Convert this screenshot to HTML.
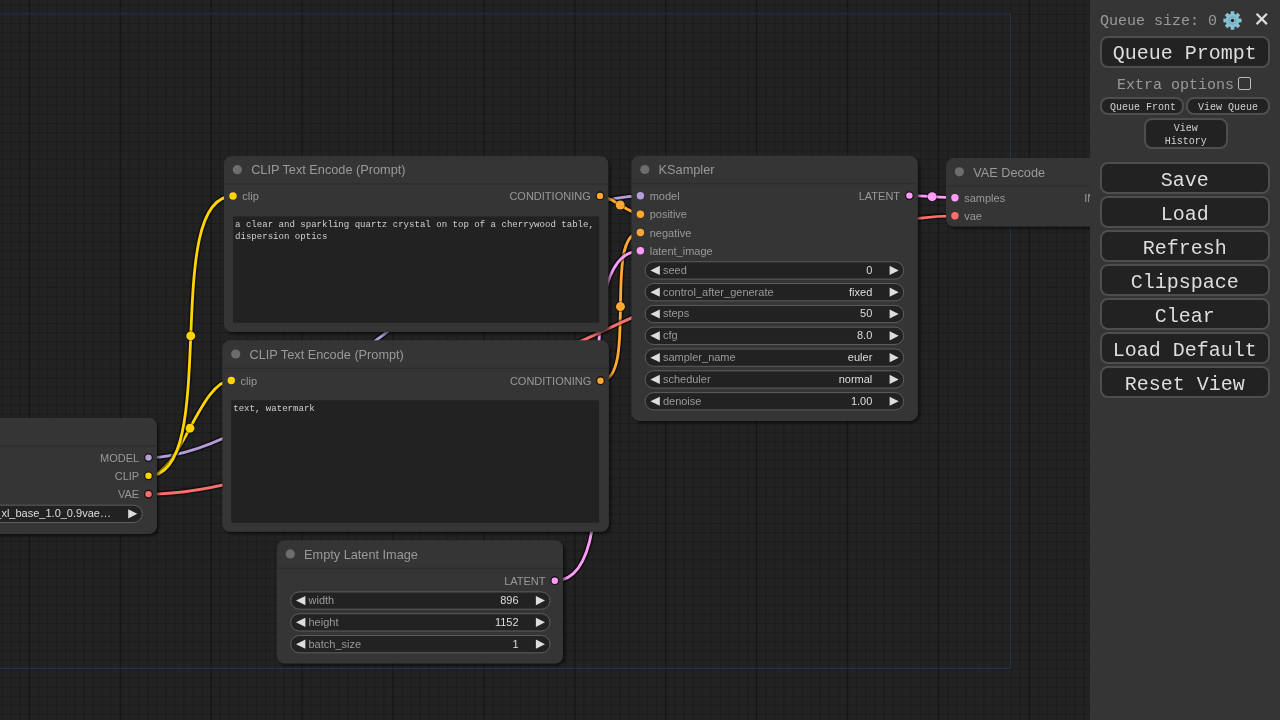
<!DOCTYPE html>
<html><head><meta charset="utf-8"><style>
html,body{margin:0;padding:0;width:1280px;height:720px;overflow:hidden;background:#222;}
body{position:relative;font-family:"Liberation Sans",sans-serif;font-variant-ligatures:none;}
text{font-variant-ligatures:none;}
#cv{position:absolute;left:0;top:0;will-change:transform;}
.tt{font-family:"Liberation Sans",sans-serif;font-size:12.73px;fill:#999;}
.sl{font-family:"Liberation Sans",sans-serif;font-size:11px;fill:#999;}
.wl{font-family:"Liberation Sans",sans-serif;font-size:11px;fill:#999;}
.wv{font-family:"Liberation Sans",sans-serif;font-size:11px;fill:#ddd;}
.ta{font-family:"Liberation Mono",monospace;font-size:9.07px;fill:#cfcfcf;}
#menu{will-change:transform;position:absolute;left:1090px;top:0;width:190px;height:720px;background:#353535;font-family:"Liberation Mono",monospace;color:#999;}
.mbtn{position:absolute;left:10px;width:169.5px;height:31px;box-sizing:border-box;border:2px solid #4e4e4e;border-radius:8px;background:#222;color:#ddd;font-size:20px;text-align:center;line-height:29px;}
</style></head><body>
<svg id="cv" width="1280" height="720" viewBox="0 0 1280 720">
<defs><filter id="sh" x="-5%" y="-5%" width="110%" height="110%"><feDropShadow dx="2" dy="2.2" stdDeviation="1.6" flood-color="#000" flood-opacity="0.55"/></filter></defs>
<rect width="1280" height="720" fill="#222"/>
<rect x="-7.46" y="0" width="1" height="720" fill="rgba(0,0,0,0.165)"/><rect x="1.63" y="0" width="1" height="720" fill="rgba(0,0,0,0.165)"/><rect x="10.72" y="0" width="1" height="720" fill="rgba(0,0,0,0.165)"/><rect x="19.81" y="0" width="1" height="720" fill="rgba(0,0,0,0.165)"/><rect x="28.70" y="0" width="1.4" height="720" fill="rgba(0,0,0,0.3)"/><rect x="37.99" y="0" width="1" height="720" fill="rgba(0,0,0,0.165)"/><rect x="47.08" y="0" width="1" height="720" fill="rgba(0,0,0,0.165)"/><rect x="56.17" y="0" width="1" height="720" fill="rgba(0,0,0,0.165)"/><rect x="65.26" y="0" width="1" height="720" fill="rgba(0,0,0,0.165)"/><rect x="74.35" y="0" width="1" height="720" fill="rgba(0,0,0,0.165)"/><rect x="83.45" y="0" width="1" height="720" fill="rgba(0,0,0,0.165)"/><rect x="92.54" y="0" width="1" height="720" fill="rgba(0,0,0,0.165)"/><rect x="101.63" y="0" width="1" height="720" fill="rgba(0,0,0,0.165)"/><rect x="110.72" y="0" width="1" height="720" fill="rgba(0,0,0,0.165)"/><rect x="119.61" y="0" width="1.4" height="720" fill="rgba(0,0,0,0.3)"/><rect x="128.90" y="0" width="1" height="720" fill="rgba(0,0,0,0.165)"/><rect x="137.99" y="0" width="1" height="720" fill="rgba(0,0,0,0.165)"/><rect x="147.08" y="0" width="1" height="720" fill="rgba(0,0,0,0.165)"/><rect x="156.17" y="0" width="1" height="720" fill="rgba(0,0,0,0.165)"/><rect x="165.26" y="0" width="1" height="720" fill="rgba(0,0,0,0.165)"/><rect x="174.35" y="0" width="1" height="720" fill="rgba(0,0,0,0.165)"/><rect x="183.45" y="0" width="1" height="720" fill="rgba(0,0,0,0.165)"/><rect x="192.54" y="0" width="1" height="720" fill="rgba(0,0,0,0.165)"/><rect x="201.63" y="0" width="1" height="720" fill="rgba(0,0,0,0.165)"/><rect x="210.52" y="0" width="1.4" height="720" fill="rgba(0,0,0,0.3)"/><rect x="219.81" y="0" width="1" height="720" fill="rgba(0,0,0,0.165)"/><rect x="228.90" y="0" width="1" height="720" fill="rgba(0,0,0,0.165)"/><rect x="237.99" y="0" width="1" height="720" fill="rgba(0,0,0,0.165)"/><rect x="247.08" y="0" width="1" height="720" fill="rgba(0,0,0,0.165)"/><rect x="256.17" y="0" width="1" height="720" fill="rgba(0,0,0,0.165)"/><rect x="265.26" y="0" width="1" height="720" fill="rgba(0,0,0,0.165)"/><rect x="274.35" y="0" width="1" height="720" fill="rgba(0,0,0,0.165)"/><rect x="283.45" y="0" width="1" height="720" fill="rgba(0,0,0,0.165)"/><rect x="292.54" y="0" width="1" height="720" fill="rgba(0,0,0,0.165)"/><rect x="301.43" y="0" width="1.4" height="720" fill="rgba(0,0,0,0.3)"/><rect x="310.72" y="0" width="1" height="720" fill="rgba(0,0,0,0.165)"/><rect x="319.81" y="0" width="1" height="720" fill="rgba(0,0,0,0.165)"/><rect x="328.90" y="0" width="1" height="720" fill="rgba(0,0,0,0.165)"/><rect x="337.99" y="0" width="1" height="720" fill="rgba(0,0,0,0.165)"/><rect x="347.08" y="0" width="1" height="720" fill="rgba(0,0,0,0.165)"/><rect x="356.17" y="0" width="1" height="720" fill="rgba(0,0,0,0.165)"/><rect x="365.26" y="0" width="1" height="720" fill="rgba(0,0,0,0.165)"/><rect x="374.35" y="0" width="1" height="720" fill="rgba(0,0,0,0.165)"/><rect x="383.45" y="0" width="1" height="720" fill="rgba(0,0,0,0.165)"/><rect x="392.34" y="0" width="1.4" height="720" fill="rgba(0,0,0,0.3)"/><rect x="401.63" y="0" width="1" height="720" fill="rgba(0,0,0,0.165)"/><rect x="410.72" y="0" width="1" height="720" fill="rgba(0,0,0,0.165)"/><rect x="419.81" y="0" width="1" height="720" fill="rgba(0,0,0,0.165)"/><rect x="428.90" y="0" width="1" height="720" fill="rgba(0,0,0,0.165)"/><rect x="437.99" y="0" width="1" height="720" fill="rgba(0,0,0,0.165)"/><rect x="447.08" y="0" width="1" height="720" fill="rgba(0,0,0,0.165)"/><rect x="456.17" y="0" width="1" height="720" fill="rgba(0,0,0,0.165)"/><rect x="465.26" y="0" width="1" height="720" fill="rgba(0,0,0,0.165)"/><rect x="474.35" y="0" width="1" height="720" fill="rgba(0,0,0,0.165)"/><rect x="483.25" y="0" width="1.4" height="720" fill="rgba(0,0,0,0.3)"/><rect x="492.54" y="0" width="1" height="720" fill="rgba(0,0,0,0.165)"/><rect x="501.63" y="0" width="1" height="720" fill="rgba(0,0,0,0.165)"/><rect x="510.72" y="0" width="1" height="720" fill="rgba(0,0,0,0.165)"/><rect x="519.81" y="0" width="1" height="720" fill="rgba(0,0,0,0.165)"/><rect x="528.90" y="0" width="1" height="720" fill="rgba(0,0,0,0.165)"/><rect x="537.99" y="0" width="1" height="720" fill="rgba(0,0,0,0.165)"/><rect x="547.08" y="0" width="1" height="720" fill="rgba(0,0,0,0.165)"/><rect x="556.17" y="0" width="1" height="720" fill="rgba(0,0,0,0.165)"/><rect x="565.26" y="0" width="1" height="720" fill="rgba(0,0,0,0.165)"/><rect x="574.15" y="0" width="1.4" height="720" fill="rgba(0,0,0,0.3)"/><rect x="583.44" y="0" width="1" height="720" fill="rgba(0,0,0,0.165)"/><rect x="592.54" y="0" width="1" height="720" fill="rgba(0,0,0,0.165)"/><rect x="601.63" y="0" width="1" height="720" fill="rgba(0,0,0,0.165)"/><rect x="610.72" y="0" width="1" height="720" fill="rgba(0,0,0,0.165)"/><rect x="619.81" y="0" width="1" height="720" fill="rgba(0,0,0,0.165)"/><rect x="628.90" y="0" width="1" height="720" fill="rgba(0,0,0,0.165)"/><rect x="637.99" y="0" width="1" height="720" fill="rgba(0,0,0,0.165)"/><rect x="647.08" y="0" width="1" height="720" fill="rgba(0,0,0,0.165)"/><rect x="656.17" y="0" width="1" height="720" fill="rgba(0,0,0,0.165)"/><rect x="665.06" y="0" width="1.4" height="720" fill="rgba(0,0,0,0.3)"/><rect x="674.35" y="0" width="1" height="720" fill="rgba(0,0,0,0.165)"/><rect x="683.44" y="0" width="1" height="720" fill="rgba(0,0,0,0.165)"/><rect x="692.54" y="0" width="1" height="720" fill="rgba(0,0,0,0.165)"/><rect x="701.63" y="0" width="1" height="720" fill="rgba(0,0,0,0.165)"/><rect x="710.72" y="0" width="1" height="720" fill="rgba(0,0,0,0.165)"/><rect x="719.81" y="0" width="1" height="720" fill="rgba(0,0,0,0.165)"/><rect x="728.90" y="0" width="1" height="720" fill="rgba(0,0,0,0.165)"/><rect x="737.99" y="0" width="1" height="720" fill="rgba(0,0,0,0.165)"/><rect x="747.08" y="0" width="1" height="720" fill="rgba(0,0,0,0.165)"/><rect x="755.97" y="0" width="1.4" height="720" fill="rgba(0,0,0,0.3)"/><rect x="765.26" y="0" width="1" height="720" fill="rgba(0,0,0,0.165)"/><rect x="774.35" y="0" width="1" height="720" fill="rgba(0,0,0,0.165)"/><rect x="783.44" y="0" width="1" height="720" fill="rgba(0,0,0,0.165)"/><rect x="792.54" y="0" width="1" height="720" fill="rgba(0,0,0,0.165)"/><rect x="801.63" y="0" width="1" height="720" fill="rgba(0,0,0,0.165)"/><rect x="810.72" y="0" width="1" height="720" fill="rgba(0,0,0,0.165)"/><rect x="819.81" y="0" width="1" height="720" fill="rgba(0,0,0,0.165)"/><rect x="828.90" y="0" width="1" height="720" fill="rgba(0,0,0,0.165)"/><rect x="837.99" y="0" width="1" height="720" fill="rgba(0,0,0,0.165)"/><rect x="846.88" y="0" width="1.4" height="720" fill="rgba(0,0,0,0.3)"/><rect x="856.17" y="0" width="1" height="720" fill="rgba(0,0,0,0.165)"/><rect x="865.26" y="0" width="1" height="720" fill="rgba(0,0,0,0.165)"/><rect x="874.35" y="0" width="1" height="720" fill="rgba(0,0,0,0.165)"/><rect x="883.44" y="0" width="1" height="720" fill="rgba(0,0,0,0.165)"/><rect x="892.54" y="0" width="1" height="720" fill="rgba(0,0,0,0.165)"/><rect x="901.63" y="0" width="1" height="720" fill="rgba(0,0,0,0.165)"/><rect x="910.72" y="0" width="1" height="720" fill="rgba(0,0,0,0.165)"/><rect x="919.81" y="0" width="1" height="720" fill="rgba(0,0,0,0.165)"/><rect x="928.90" y="0" width="1" height="720" fill="rgba(0,0,0,0.165)"/><rect x="937.79" y="0" width="1.4" height="720" fill="rgba(0,0,0,0.3)"/><rect x="947.08" y="0" width="1" height="720" fill="rgba(0,0,0,0.165)"/><rect x="956.17" y="0" width="1" height="720" fill="rgba(0,0,0,0.165)"/><rect x="965.26" y="0" width="1" height="720" fill="rgba(0,0,0,0.165)"/><rect x="974.35" y="0" width="1" height="720" fill="rgba(0,0,0,0.165)"/><rect x="983.44" y="0" width="1" height="720" fill="rgba(0,0,0,0.165)"/><rect x="992.54" y="0" width="1" height="720" fill="rgba(0,0,0,0.165)"/><rect x="1001.63" y="0" width="1" height="720" fill="rgba(0,0,0,0.165)"/><rect x="1010.72" y="0" width="1" height="720" fill="rgba(0,0,0,0.165)"/><rect x="1019.81" y="0" width="1" height="720" fill="rgba(0,0,0,0.165)"/><rect x="1028.70" y="0" width="1.4" height="720" fill="rgba(0,0,0,0.3)"/><rect x="1037.99" y="0" width="1" height="720" fill="rgba(0,0,0,0.165)"/><rect x="1047.08" y="0" width="1" height="720" fill="rgba(0,0,0,0.165)"/><rect x="1056.17" y="0" width="1" height="720" fill="rgba(0,0,0,0.165)"/><rect x="1065.26" y="0" width="1" height="720" fill="rgba(0,0,0,0.165)"/><rect x="1074.35" y="0" width="1" height="720" fill="rgba(0,0,0,0.165)"/><rect x="1083.44" y="0" width="1" height="720" fill="rgba(0,0,0,0.165)"/><rect x="1092.54" y="0" width="1" height="720" fill="rgba(0,0,0,0.165)"/><rect x="0" y="-4.28" width="1095" height="1" fill="rgba(0,0,0,0.165)"/><rect x="0" y="4.81" width="1095" height="1" fill="rgba(0,0,0,0.165)"/><rect x="0" y="13.90" width="1095" height="1" fill="rgba(0,0,0,0.2)"/><rect x="0" y="22.99" width="1095" height="1" fill="rgba(0,0,0,0.165)"/><rect x="0" y="32.08" width="1095" height="1" fill="rgba(0,0,0,0.165)"/><rect x="0" y="41.17" width="1095" height="1" fill="rgba(0,0,0,0.165)"/><rect x="0" y="50.26" width="1095" height="1" fill="rgba(0,0,0,0.165)"/><rect x="0" y="59.35" width="1095" height="1" fill="rgba(0,0,0,0.165)"/><rect x="0" y="68.45" width="1095" height="1" fill="rgba(0,0,0,0.165)"/><rect x="0" y="77.54" width="1095" height="1" fill="rgba(0,0,0,0.165)"/><rect x="0" y="86.63" width="1095" height="1" fill="rgba(0,0,0,0.165)"/><rect x="0" y="95.72" width="1095" height="1" fill="rgba(0,0,0,0.165)"/><rect x="0" y="104.81" width="1095" height="1" fill="rgba(0,0,0,0.2)"/><rect x="0" y="113.90" width="1095" height="1" fill="rgba(0,0,0,0.165)"/><rect x="0" y="122.99" width="1095" height="1" fill="rgba(0,0,0,0.165)"/><rect x="0" y="132.08" width="1095" height="1" fill="rgba(0,0,0,0.165)"/><rect x="0" y="141.17" width="1095" height="1" fill="rgba(0,0,0,0.165)"/><rect x="0" y="150.26" width="1095" height="1" fill="rgba(0,0,0,0.165)"/><rect x="0" y="159.35" width="1095" height="1" fill="rgba(0,0,0,0.165)"/><rect x="0" y="168.45" width="1095" height="1" fill="rgba(0,0,0,0.165)"/><rect x="0" y="177.54" width="1095" height="1" fill="rgba(0,0,0,0.165)"/><rect x="0" y="186.63" width="1095" height="1" fill="rgba(0,0,0,0.165)"/><rect x="0" y="195.72" width="1095" height="1" fill="rgba(0,0,0,0.2)"/><rect x="0" y="204.81" width="1095" height="1" fill="rgba(0,0,0,0.165)"/><rect x="0" y="213.90" width="1095" height="1" fill="rgba(0,0,0,0.165)"/><rect x="0" y="222.99" width="1095" height="1" fill="rgba(0,0,0,0.165)"/><rect x="0" y="232.08" width="1095" height="1" fill="rgba(0,0,0,0.165)"/><rect x="0" y="241.17" width="1095" height="1" fill="rgba(0,0,0,0.165)"/><rect x="0" y="250.26" width="1095" height="1" fill="rgba(0,0,0,0.165)"/><rect x="0" y="259.35" width="1095" height="1" fill="rgba(0,0,0,0.165)"/><rect x="0" y="268.45" width="1095" height="1" fill="rgba(0,0,0,0.165)"/><rect x="0" y="277.54" width="1095" height="1" fill="rgba(0,0,0,0.165)"/><rect x="0" y="286.63" width="1095" height="1" fill="rgba(0,0,0,0.2)"/><rect x="0" y="295.72" width="1095" height="1" fill="rgba(0,0,0,0.165)"/><rect x="0" y="304.81" width="1095" height="1" fill="rgba(0,0,0,0.165)"/><rect x="0" y="313.90" width="1095" height="1" fill="rgba(0,0,0,0.165)"/><rect x="0" y="322.99" width="1095" height="1" fill="rgba(0,0,0,0.165)"/><rect x="0" y="332.08" width="1095" height="1" fill="rgba(0,0,0,0.165)"/><rect x="0" y="341.17" width="1095" height="1" fill="rgba(0,0,0,0.165)"/><rect x="0" y="350.26" width="1095" height="1" fill="rgba(0,0,0,0.165)"/><rect x="0" y="359.35" width="1095" height="1" fill="rgba(0,0,0,0.165)"/><rect x="0" y="368.45" width="1095" height="1" fill="rgba(0,0,0,0.165)"/><rect x="0" y="377.54" width="1095" height="1" fill="rgba(0,0,0,0.2)"/><rect x="0" y="386.63" width="1095" height="1" fill="rgba(0,0,0,0.165)"/><rect x="0" y="395.72" width="1095" height="1" fill="rgba(0,0,0,0.165)"/><rect x="0" y="404.81" width="1095" height="1" fill="rgba(0,0,0,0.165)"/><rect x="0" y="413.90" width="1095" height="1" fill="rgba(0,0,0,0.165)"/><rect x="0" y="422.99" width="1095" height="1" fill="rgba(0,0,0,0.165)"/><rect x="0" y="432.08" width="1095" height="1" fill="rgba(0,0,0,0.165)"/><rect x="0" y="441.17" width="1095" height="1" fill="rgba(0,0,0,0.165)"/><rect x="0" y="450.26" width="1095" height="1" fill="rgba(0,0,0,0.165)"/><rect x="0" y="459.35" width="1095" height="1" fill="rgba(0,0,0,0.165)"/><rect x="0" y="468.45" width="1095" height="1" fill="rgba(0,0,0,0.2)"/><rect x="0" y="477.54" width="1095" height="1" fill="rgba(0,0,0,0.165)"/><rect x="0" y="486.63" width="1095" height="1" fill="rgba(0,0,0,0.165)"/><rect x="0" y="495.72" width="1095" height="1" fill="rgba(0,0,0,0.165)"/><rect x="0" y="504.81" width="1095" height="1" fill="rgba(0,0,0,0.165)"/><rect x="0" y="513.90" width="1095" height="1" fill="rgba(0,0,0,0.165)"/><rect x="0" y="522.99" width="1095" height="1" fill="rgba(0,0,0,0.165)"/><rect x="0" y="532.08" width="1095" height="1" fill="rgba(0,0,0,0.165)"/><rect x="0" y="541.17" width="1095" height="1" fill="rgba(0,0,0,0.165)"/><rect x="0" y="550.26" width="1095" height="1" fill="rgba(0,0,0,0.165)"/><rect x="0" y="559.35" width="1095" height="1" fill="rgba(0,0,0,0.2)"/><rect x="0" y="568.44" width="1095" height="1" fill="rgba(0,0,0,0.165)"/><rect x="0" y="577.54" width="1095" height="1" fill="rgba(0,0,0,0.165)"/><rect x="0" y="586.63" width="1095" height="1" fill="rgba(0,0,0,0.165)"/><rect x="0" y="595.72" width="1095" height="1" fill="rgba(0,0,0,0.165)"/><rect x="0" y="604.81" width="1095" height="1" fill="rgba(0,0,0,0.165)"/><rect x="0" y="613.90" width="1095" height="1" fill="rgba(0,0,0,0.165)"/><rect x="0" y="622.99" width="1095" height="1" fill="rgba(0,0,0,0.165)"/><rect x="0" y="632.08" width="1095" height="1" fill="rgba(0,0,0,0.165)"/><rect x="0" y="641.17" width="1095" height="1" fill="rgba(0,0,0,0.165)"/><rect x="0" y="650.26" width="1095" height="1" fill="rgba(0,0,0,0.2)"/><rect x="0" y="659.35" width="1095" height="1" fill="rgba(0,0,0,0.165)"/><rect x="0" y="668.44" width="1095" height="1" fill="rgba(0,0,0,0.165)"/><rect x="0" y="677.54" width="1095" height="1" fill="rgba(0,0,0,0.165)"/><rect x="0" y="686.63" width="1095" height="1" fill="rgba(0,0,0,0.165)"/><rect x="0" y="695.72" width="1095" height="1" fill="rgba(0,0,0,0.165)"/><rect x="0" y="704.81" width="1095" height="1" fill="rgba(0,0,0,0.165)"/><rect x="0" y="713.90" width="1095" height="1" fill="rgba(0,0,0,0.165)"/><rect x="0" y="722.99" width="1095" height="1" fill="rgba(0,0,0,0.165)"/>
<rect x="-10" y="14.0" width="1020.5" height="654.5" fill="none" stroke="#243352" stroke-width="1"/>
<path d="M148.50,457.60 C287.81,457.60 501.09,195.80 640.40,195.80" stroke="rgba(0,0,0,0.5)" stroke-width="6.0" fill="none"/>
<path d="M148.50,457.60 C287.81,457.60 501.09,195.80 640.40,195.80" stroke="#B39DDB" stroke-width="2.8" fill="none"/>
<circle cx="394.45" cy="326.70" r="5.3" fill="rgba(0,0,0,0.45)"/><circle cx="394.45" cy="326.70" r="4.5" fill="#B39DDB"/>
<path d="M600.00,195.90 C611.09,195.90 629.31,214.20 640.40,214.20" stroke="rgba(0,0,0,0.5)" stroke-width="6.0" fill="none"/>
<path d="M600.00,195.90 C611.09,195.90 629.31,214.20 640.40,214.20" stroke="#FFA931" stroke-width="2.8" fill="none"/>
<circle cx="620.20" cy="205.05" r="5.3" fill="rgba(0,0,0,0.45)"/><circle cx="620.20" cy="205.05" r="4.5" fill="#FFA931"/>
<path d="M600.50,380.70 C638.87,380.70 602.03,232.50 640.40,232.50" stroke="rgba(0,0,0,0.5)" stroke-width="6.0" fill="none"/>
<path d="M600.50,380.70 C638.87,380.70 602.03,232.50 640.40,232.50" stroke="#FFA931" stroke-width="2.8" fill="none"/>
<circle cx="620.45" cy="306.60" r="5.3" fill="rgba(0,0,0,0.45)"/><circle cx="620.45" cy="306.60" r="4.5" fill="#FFA931"/>
<path d="M554.80,580.70 C640.01,580.70 555.19,250.80 640.40,250.80" stroke="rgba(0,0,0,0.5)" stroke-width="6.0" fill="none"/>
<path d="M554.80,580.70 C640.01,580.70 555.19,250.80 640.40,250.80" stroke="#FF9CF9" stroke-width="2.8" fill="none"/>
<circle cx="597.60" cy="415.75" r="5.3" fill="rgba(0,0,0,0.45)"/><circle cx="597.60" cy="415.75" r="4.5" fill="#FF9CF9"/>
<path d="M148.50,475.80 C180.06,475.80 199.74,380.50 231.30,380.50" stroke="rgba(0,0,0,0.5)" stroke-width="6.0" fill="none"/>
<path d="M148.50,475.80 C180.06,475.80 199.74,380.50 231.30,380.50" stroke="#FFD500" stroke-width="2.8" fill="none"/>
<circle cx="189.90" cy="428.15" r="5.3" fill="rgba(0,0,0,0.45)"/><circle cx="189.90" cy="428.15" r="4.5" fill="#FFD500"/>
<path d="M148.50,475.80 C221.57,475.80 159.93,196.00 233.00,196.00" stroke="rgba(0,0,0,0.5)" stroke-width="6.0" fill="none"/>
<path d="M148.50,475.80 C221.57,475.80 159.93,196.00 233.00,196.00" stroke="#FFD500" stroke-width="2.8" fill="none"/>
<circle cx="190.75" cy="335.90" r="5.3" fill="rgba(0,0,0,0.45)"/><circle cx="190.75" cy="335.90" r="4.5" fill="#FFD500"/>
<path d="M909.40,195.60 C920.79,195.60 943.51,197.70 954.90,197.70" stroke="rgba(0,0,0,0.5)" stroke-width="6.0" fill="none"/>
<path d="M909.40,195.60 C920.79,195.60 943.51,197.70 954.90,197.70" stroke="#FF9CF9" stroke-width="2.8" fill="none"/>
<circle cx="932.15" cy="196.65" r="5.3" fill="rgba(0,0,0,0.45)"/><circle cx="932.15" cy="196.65" r="4.5" fill="#FF9CF9"/>
<path d="M148.50,494.10 C361.77,494.10 741.63,215.80 954.90,215.80" stroke="rgba(0,0,0,0.5)" stroke-width="6.0" fill="none"/>
<path d="M148.50,494.10 C361.77,494.10 741.63,215.80 954.90,215.80" stroke="#FF6E6E" stroke-width="2.8" fill="none"/>
<circle cx="551.70" cy="354.95" r="5.3" fill="rgba(0,0,0,0.45)"/><circle cx="551.70" cy="354.95" r="4.5" fill="#FF6E6E"/>
<g><rect x="-140.00" y="417.90" width="296.90" height="116.00" rx="8" fill="#353535" filter="url(#sh)"/>
<rect x="-140.00" y="445.40" width="296.90" height="1" fill="#2b2b2b"/>
<circle cx="-126.60" cy="431.60" r="4.6" fill="#6d6d6d"/>
<text x="-112.80" y="436.30" class="tt">Load Checkpoint</text>
<circle cx="148.50" cy="457.60" r="3.8" fill="#B39DDB" stroke="rgba(0,0,0,0.85)" stroke-width="1.2"/>
<text x="139.20" y="461.80" class="sl" text-anchor="end">MODEL</text>
<circle cx="148.50" cy="475.80" r="3.8" fill="#FFD500" stroke="rgba(0,0,0,0.85)" stroke-width="1.2"/>
<text x="139.20" y="480.00" class="sl" text-anchor="end">CLIP</text>
<circle cx="148.50" cy="494.10" r="3.8" fill="#FF6E6E" stroke="rgba(0,0,0,0.85)" stroke-width="1.2"/>
<text x="139.20" y="498.30" class="sl" text-anchor="end">VAE</text>
<rect x="-130.50" y="505.20" width="272.80" height="17.30" rx="8.65" fill="#222" stroke="#5e5e5e" stroke-width="1"/>
<polygon points="-125.20,513.85 -115.80,509.25 -115.80,518.45" fill="#ddd"/>
<polygon points="137.30,513.85 128.20,509.25 128.20,518.45" fill="#ddd"/>
<text x="-112.70" y="517.30" class="wl">ckpt_name</text>
<text x="110.90" y="517.30" class="wv" text-anchor="end">sd_xl_base_1.0_0.9vae…</text>
</g>
<g><rect x="223.95" y="156.00" width="384.35" height="175.90" rx="8" fill="#353535" filter="url(#sh)"/>
<rect x="223.95" y="183.50" width="384.35" height="1" fill="#2b2b2b"/>
<circle cx="237.35" cy="169.70" r="4.6" fill="#6d6d6d"/>
<text x="251.15" y="174.40" class="tt">CLIP Text Encode (Prompt)</text>
<circle cx="233.00" cy="196.00" r="3.7" fill="#FFD500"/>
<text x="242.30" y="200.20" class="sl">clip</text>
<circle cx="600.00" cy="195.90" r="3.8" fill="#FFA931" stroke="rgba(0,0,0,0.85)" stroke-width="1.2"/>
<text x="590.70" y="200.10" class="sl" text-anchor="end">CONDITIONING</text>
<rect x="233.0" y="216.4" width="366.20" height="106.30" fill="#222"/>
<text x="235.0" y="226.9" class="ta">a clear and sparkling quartz crystal on top of a cherrywood table,</text>
<text x="235.0" y="238.9" class="ta">dispersion optics</text>
</g>
<g><rect x="222.30" y="340.30" width="386.60" height="191.50" rx="8" fill="#353535" filter="url(#sh)"/>
<rect x="222.30" y="367.80" width="386.60" height="1" fill="#2b2b2b"/>
<circle cx="235.70" cy="354.00" r="4.6" fill="#6d6d6d"/>
<text x="249.50" y="358.70" class="tt">CLIP Text Encode (Prompt)</text>
<circle cx="231.30" cy="380.50" r="3.7" fill="#FFD500"/>
<text x="240.60" y="384.70" class="sl">clip</text>
<circle cx="600.50" cy="380.70" r="3.8" fill="#FFA931" stroke="rgba(0,0,0,0.85)" stroke-width="1.2"/>
<text x="591.20" y="384.90" class="sl" text-anchor="end">CONDITIONING</text>
<rect x="231.2" y="400.3" width="367.90" height="122.40" fill="#222"/>
<text x="233.2" y="410.8" class="ta">text, watermark</text>
</g>
<g><rect x="631.40" y="155.80" width="286.40" height="265.10" rx="8" fill="#353535" filter="url(#sh)"/>
<rect x="631.40" y="183.30" width="286.40" height="1" fill="#2b2b2b"/>
<circle cx="644.80" cy="169.50" r="4.6" fill="#6d6d6d"/>
<text x="658.60" y="174.20" class="tt">KSampler</text>
<circle cx="640.40" cy="195.80" r="3.7" fill="#B39DDB"/>
<text x="649.70" y="200.00" class="sl">model</text>
<circle cx="640.40" cy="214.20" r="3.7" fill="#FFA931"/>
<text x="649.70" y="218.40" class="sl">positive</text>
<circle cx="640.40" cy="232.50" r="3.7" fill="#FFA931"/>
<text x="649.70" y="236.70" class="sl">negative</text>
<circle cx="640.40" cy="250.80" r="3.7" fill="#FF9CF9"/>
<text x="649.70" y="255.00" class="sl">latent_image</text>
<circle cx="909.40" cy="195.60" r="3.8" fill="#FF9CF9" stroke="rgba(0,0,0,0.85)" stroke-width="1.2"/>
<text x="900.10" y="199.80" class="sl" text-anchor="end">LATENT</text>
<rect x="645.10" y="261.75" width="258.60" height="17.30" rx="8.65" fill="#222" stroke="#5e5e5e" stroke-width="1"/>
<polygon points="650.40,270.40 659.80,265.80 659.80,275.00" fill="#ddd"/>
<polygon points="898.70,270.40 889.60,265.80 889.60,275.00" fill="#ddd"/>
<text x="662.90" y="273.85" class="wl">seed</text>
<text x="872.30" y="273.85" class="wv" text-anchor="end">0</text>
<rect x="645.10" y="283.56" width="258.60" height="17.30" rx="8.65" fill="#222" stroke="#5e5e5e" stroke-width="1"/>
<polygon points="650.40,292.21 659.80,287.61 659.80,296.81" fill="#ddd"/>
<polygon points="898.70,292.21 889.60,287.61 889.60,296.81" fill="#ddd"/>
<text x="662.90" y="295.66" class="wl">control_after_generate</text>
<text x="872.30" y="295.66" class="wv" text-anchor="end">fixed</text>
<rect x="645.10" y="305.37" width="258.60" height="17.30" rx="8.65" fill="#222" stroke="#5e5e5e" stroke-width="1"/>
<polygon points="650.40,314.02 659.80,309.42 659.80,318.62" fill="#ddd"/>
<polygon points="898.70,314.02 889.60,309.42 889.60,318.62" fill="#ddd"/>
<text x="662.90" y="317.47" class="wl">steps</text>
<text x="872.30" y="317.47" class="wv" text-anchor="end">50</text>
<rect x="645.10" y="327.18" width="258.60" height="17.30" rx="8.65" fill="#222" stroke="#5e5e5e" stroke-width="1"/>
<polygon points="650.40,335.83 659.80,331.23 659.80,340.43" fill="#ddd"/>
<polygon points="898.70,335.83 889.60,331.23 889.60,340.43" fill="#ddd"/>
<text x="662.90" y="339.28" class="wl">cfg</text>
<text x="872.30" y="339.28" class="wv" text-anchor="end">8.0</text>
<rect x="645.10" y="348.99" width="258.60" height="17.30" rx="8.65" fill="#222" stroke="#5e5e5e" stroke-width="1"/>
<polygon points="650.40,357.64 659.80,353.04 659.80,362.24" fill="#ddd"/>
<polygon points="898.70,357.64 889.60,353.04 889.60,362.24" fill="#ddd"/>
<text x="662.90" y="361.09" class="wl">sampler_name</text>
<text x="872.30" y="361.09" class="wv" text-anchor="end">euler</text>
<rect x="645.10" y="370.80" width="258.60" height="17.30" rx="8.65" fill="#222" stroke="#5e5e5e" stroke-width="1"/>
<polygon points="650.40,379.45 659.80,374.85 659.80,384.05" fill="#ddd"/>
<polygon points="898.70,379.45 889.60,374.85 889.60,384.05" fill="#ddd"/>
<text x="662.90" y="382.90" class="wl">scheduler</text>
<text x="872.30" y="382.90" class="wv" text-anchor="end">normal</text>
<rect x="645.10" y="392.61" width="258.60" height="17.30" rx="8.65" fill="#222" stroke="#5e5e5e" stroke-width="1"/>
<polygon points="650.40,401.26 659.80,396.66 659.80,405.86" fill="#ddd"/>
<polygon points="898.70,401.26 889.60,396.66 889.60,405.86" fill="#ddd"/>
<text x="662.90" y="404.71" class="wl">denoise</text>
<text x="872.30" y="404.71" class="wv" text-anchor="end">1.00</text>
</g>
<g><rect x="946.00" y="158.10" width="200.00" height="68.50" rx="8" fill="#353535" filter="url(#sh)"/>
<rect x="946.00" y="185.60" width="200.00" height="1" fill="#2b2b2b"/>
<circle cx="959.40" cy="171.80" r="4.6" fill="#6d6d6d"/>
<text x="973.20" y="176.50" class="tt">VAE Decode</text>
<circle cx="954.90" cy="197.70" r="3.7" fill="#FF9CF9"/>
<text x="964.20" y="201.90" class="sl">samples</text>
<circle cx="954.90" cy="215.80" r="3.7" fill="#FF6E6E"/>
<text x="964.20" y="220.00" class="sl">vae</text>
<text x="1084.3" y="201.60" class="sl">IMAGE</text>
</g>
<g><rect x="276.90" y="540.20" width="286.10" height="123.40" rx="8" fill="#353535" filter="url(#sh)"/>
<rect x="276.90" y="567.70" width="286.10" height="1" fill="#2b2b2b"/>
<circle cx="290.30" cy="553.90" r="4.6" fill="#6d6d6d"/>
<text x="304.10" y="558.60" class="tt">Empty Latent Image</text>
<circle cx="554.80" cy="580.70" r="3.8" fill="#FF9CF9" stroke="rgba(0,0,0,0.85)" stroke-width="1.2"/>
<text x="545.50" y="584.90" class="sl" text-anchor="end">LATENT</text>
<rect x="290.70" y="591.90" width="259.30" height="17.30" rx="8.65" fill="#222" stroke="#5e5e5e" stroke-width="1"/>
<polygon points="296.00,600.55 305.40,595.95 305.40,605.15" fill="#ddd"/>
<polygon points="545.00,600.55 535.90,595.95 535.90,605.15" fill="#ddd"/>
<text x="308.50" y="604.00" class="wl">width</text>
<text x="518.60" y="604.00" class="wv" text-anchor="end">896</text>
<rect x="290.70" y="613.71" width="259.30" height="17.30" rx="8.65" fill="#222" stroke="#5e5e5e" stroke-width="1"/>
<polygon points="296.00,622.36 305.40,617.76 305.40,626.96" fill="#ddd"/>
<polygon points="545.00,622.36 535.90,617.76 535.90,626.96" fill="#ddd"/>
<text x="308.50" y="625.81" class="wl">height</text>
<text x="518.60" y="625.81" class="wv" text-anchor="end">1152</text>
<rect x="290.70" y="635.52" width="259.30" height="17.30" rx="8.65" fill="#222" stroke="#5e5e5e" stroke-width="1"/>
<polygon points="296.00,644.17 305.40,639.57 305.40,648.77" fill="#ddd"/>
<polygon points="545.00,644.17 535.90,639.57 535.90,648.77" fill="#ddd"/>
<text x="308.50" y="647.62" class="wl">batch_size</text>
<text x="518.60" y="647.62" class="wv" text-anchor="end">1</text>
</g>
</svg>
<div id="menu">
<div style="position:absolute;left:10px;top:12.5px;font-size:15px;color:#999;white-space:nowrap">Queue size: 0</div>
<svg style="position:absolute;left:132.90px;top:10.70px" width="19" height="19"><polygon points="15.90,7.52 18.63,7.74 18.63,11.26 15.90,11.48 15.69,12.06 15.43,12.63 17.20,14.72 14.72,17.20 12.63,15.43 12.06,15.69 11.48,15.90 11.26,18.63 7.74,18.63 7.52,15.90 6.94,15.69 6.37,15.43 4.28,17.20 1.80,14.72 3.57,12.63 3.31,12.06 3.10,11.48 0.37,11.26 0.37,7.74 3.10,7.52 3.31,6.94 3.57,6.37 1.80,4.28 4.28,1.80 6.37,3.57 6.94,3.31 7.52,3.10 7.74,0.37 11.26,0.37 11.48,3.10 12.06,3.31 12.63,3.57 14.72,1.80 17.20,4.28 15.43,6.37 15.69,6.94" fill="#88c1d3"/><circle cx="9.5" cy="9.5" r="3.6" fill="none" stroke="#6aaec2" stroke-width="1.3"/><circle cx="9.5" cy="9.5" r="1.7" fill="#262626"/></svg>
<svg style="position:absolute;left:165px;top:12px" width="14" height="14"><path d="M1.6,1.8 L11.9,12.1 M11.9,1.8 L1.6,12.1" stroke="#ddd" stroke-width="2.2"/></svg>
<div class="mbtn" style="top:36px;height:31.5px;font-size:20px;line-height:32px">Queue Prompt</div>
<div style="position:absolute;left:27px;top:77px;font-size:15px;color:#999;white-space:nowrap">Extra options</div>
<div style="position:absolute;left:148.2px;top:77.3px;width:12.5px;height:12.5px;box-sizing:border-box;border:1px solid #bbb;border-radius:2px"></div>
<div class="mbtn" style="top:97.3px;left:10.3px;width:84.2px;height:18px;font-size:10px;line-height:17.5px;border-radius:8px;color:#cfcfcf;padding-left:1px">Queue Front</div>
<div class="mbtn" style="top:97.3px;left:96px;width:84px;height:18px;font-size:10px;line-height:17.5px;border-radius:8px;color:#cfcfcf">View Queue</div>
<div class="mbtn" style="top:118.4px;left:53.7px;width:84px;height:31.1px;font-size:10px;line-height:13.2px;border-radius:8px;padding-top:1.9px;color:#cfcfcf">View<br>History</div>
<div class="mbtn" style="top:161.90px;height:31.8px;line-height:33.5px">Save</div><div class="mbtn" style="top:195.95px;height:31.8px;line-height:33.5px">Load</div><div class="mbtn" style="top:230.00px;height:31.8px;line-height:33.5px">Refresh</div><div class="mbtn" style="top:264.05px;height:31.8px;line-height:33.5px">Clipspace</div><div class="mbtn" style="top:298.10px;height:31.8px;line-height:33.5px">Clear</div><div class="mbtn" style="top:332.15px;height:31.8px;line-height:33.5px">Load Default</div><div class="mbtn" style="top:366.20px;height:31.8px;line-height:33.5px">Reset View</div>
</div>
</body></html>
